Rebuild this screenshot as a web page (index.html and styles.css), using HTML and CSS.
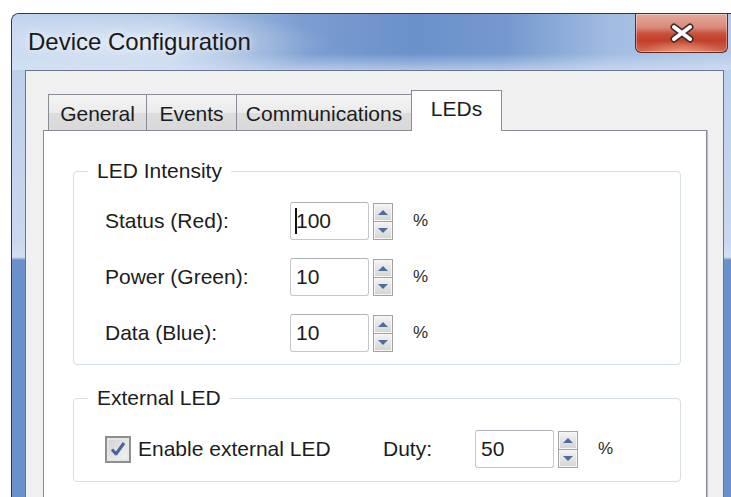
FILE: index.html
```html
<!DOCTYPE html>
<html lang="en">
<head>
<meta charset="utf-8">
<title>Device Configuration</title>
<link rel="stylesheet" href="styles.css">
</head>
<body>
<div class="window">
  <div class="titlebar">
    <span class="title">Device Configuration</span>
    <button class="close" type="button" aria-label="Close">
      <svg width="26" height="20" viewBox="0 0 26 20">
        <path d="M5 4 L21 16 M21 4 L5 16" stroke="#3a2b2b" stroke-width="7" stroke-linecap="round" fill="none"/>
        <path d="M5 4 L21 16 M21 4 L5 16" stroke="#ffffff" stroke-width="4" stroke-linecap="round" fill="none"/>
      </svg>
    </button>
  </div>
  <div class="frame">
    <div class="client">
      <div class="tabs">
        <div class="tab tab-general">General</div>
        <div class="tab tab-events">Events</div>
        <div class="tab tab-comms">Communications</div>
        <div class="tab tab-leds selected">LEDs</div>
      </div>
      <div class="panel">
        <fieldset class="group group-intensity">
          <legend>LED Intensity</legend>
          <div class="rows">
            <div class="row">
              <span class="label">Status (Red):</span>
              <div class="field"><span class="caret"></span>100</div>
              <div class="spin"><span class="spin-btn up"><i></i></span><span class="spin-btn down"><i></i></span></div>
              <span class="unit">%</span>
            </div>
            <div class="row">
              <span class="label">Power (Green):</span>
              <div class="field">10</div>
              <div class="spin"><span class="spin-btn up"><i></i></span><span class="spin-btn down"><i></i></span></div>
              <span class="unit">%</span>
            </div>
            <div class="row">
              <span class="label">Data (Blue):</span>
              <div class="field">10</div>
              <div class="spin"><span class="spin-btn up"><i></i></span><span class="spin-btn down"><i></i></span></div>
              <span class="unit">%</span>
            </div>
          </div>
        </fieldset>
        <fieldset class="group group-external">
          <legend>External LED</legend>
          <div class="rows">
            <div class="row">
              <label class="check">
                <span class="box">
                  <svg width="18" height="18" viewBox="0 0 18 18"><path d="M3 9.5 L7 14 L15 3" stroke="#4a62a0" stroke-width="3" fill="none" stroke-linejoin="round"/></svg>
                </span>
                <span>Enable external LED</span>
              </label>
              <span class="duty">Duty:</span>
              <div class="field">50</div>
              <div class="spin"><span class="spin-btn up"><i></i></span><span class="spin-btn down"><i></i></span></div>
              <span class="unit">%</span>
            </div>
          </div>
        </fieldset>
      </div>
    </div>
  </div>
</div>
</body>
</html>
```
FILE: styles.css
```css
* {
  box-sizing: border-box;
}

html,
body {
  margin: 0;
}

body {
  width: 731px;
  height: 497px;
  overflow: hidden;
  background: #ffffff;
  font-family: "Liberation Sans", Arial, sans-serif;
  font-size: 21px;
  color: #1c1c1c;
}

/* Aero window shell */
.window {
  margin: 13px 0 0 11px;
  width: 730px;
  height: 490px;
  border: 1px solid #2e3949;
  border-right: none;
  border-bottom: none;
  border-radius: 8px 0 0 0;
  background: linear-gradient(180deg, #b9cdea 0px, #c9d8ee 228px, #d4e0f1 243px, #6b91cb 246px, #6b91cb 100%);
  display: flex;
  flex-direction: column;
}

.titlebar {
  height: 56px;
  flex: none;
  display: flex;
  align-items: flex-start;
  border-radius: 7px 0 0 0;
  background:
    radial-gradient(ellipse 190px 34px at 130px 30px, rgba(255, 255, 255, 0.55), rgba(255, 255, 255, 0) 100%),
    linear-gradient(180deg, rgba(255, 255, 255, 0) 70%, rgba(220, 232, 246, 0.6) 100%),
    linear-gradient(90deg, #c3d5ee 0%, #b2c8e8 22%, #7b9dd1 40%, #6b91cb 55%, #7599cf 68%, #a2bce2 82%, #b6cbe9 100%);
}

.title {
  margin: 14px 0 0 16px;
  font-size: 24px;
  line-height: 28px;
  color: #1a1a1a;
  text-shadow: 0 0 8px rgba(255, 255, 255, 0.9);
}

.close {
  margin: 0 13px 0 auto;
  width: 93px;
  height: 39px;
  padding: 0;
  border: 1px solid #5e2a22;
  border-top: none;
  border-radius: 0 0 6px 6px;
  display: flex;
  align-items: center;
  justify-content: center;
  background:
    radial-gradient(ellipse 40px 12px at 50% 100%, rgba(255, 190, 150, 0.55), rgba(255, 190, 150, 0)),
    linear-gradient(180deg, #e6a99b 0%, #d98a7b 35%, #c8503b 52%, #c33f2a 70%, #d26a55 100%);
  box-shadow: inset 0 0 0 1px rgba(255, 255, 255, 0.35);
}

.frame {
  flex: 1;
  display: flex;
  padding-left: 13px;
  min-height: 0;
}

.client {
  width: 699px;
  border: 1px solid #66768d;
  border-bottom: none;
  background: #f0f0f0;
  display: flex;
  flex-direction: column;
}

/* Tab strip */
.tabs {
  display: flex;
  align-items: flex-end;
  height: 41px;
  margin: 19px 0 0 22px;
  position: relative;
  z-index: 1;
}

.tab {
  height: 36px;
  margin: 0 -1px 1px 0;
  padding-top: 7px;
  line-height: 24px;
  text-align: center;
  border: 1px solid #898c95;
  border-bottom: none;
  background: linear-gradient(180deg, #f4f4f4 0%, #ebebeb 50%, #dddddd 51%, #d9d9d9 100%);
  color: #1c1c1c;
}

.tab-general {
  width: 99px;
}

.tab-events {
  width: 91px;
}

.tab-comms {
  width: 176px;
}

.tab.selected {
  width: 91px;
  height: 41px;
  margin-bottom: 0;
  padding-top: 6px;
  background: #ffffff;
  border-color: #898c95;
}

.panel {
  flex: 1;
  margin: -1px 0 0 17px;
  width: 664px;
  padding: 28px 25px 0 29px;
  background: #ffffff;
  border: 1px solid #898c95;
  border-bottom: none;
  box-shadow: 1px 0 0 #b9bcc2;
}

/* Group boxes */
.group {
  margin: 0;
  padding: 0;
  min-width: 0;
  border: 1px solid #d6dfe6;
  border-radius: 4px;
}

.group legend {
  margin-left: 14px;
  padding: 0 9px;
  font-size: 21px;
  line-height: 24px;
  color: #1c1c1c;
}

.group-external {
  margin-top: 21px;
}

.rows {
  display: flex;
  flex-direction: column;
  gap: 18px;
  padding: 19px 0 12px 31px;
}

.group-external .rows {
  padding: 20px 0 13px 31px;
}

.row {
  display: flex;
  align-items: center;
  height: 38px;
  line-height: 24px;
}

.label {
  width: 185px;
}

.field {
  width: 79px;
  height: 38px;
  padding-left: 5px;
  display: flex;
  align-items: center;
  border: 1px solid #c4c8ce;
  border-top-color: #adb2b9;
  border-radius: 3px;
  background: #ffffff;
}

.caret {
  width: 2px;
  height: 26px;
  margin: 0 -1px 0 -1px;
  background: #111111;
}

/* Up/down buttons */
.spin {
  width: 20px;
  height: 37px;
  margin-left: 4px;
  display: flex;
  flex-direction: column;
  border: 1px solid #a3a3a3;
  background: #a3a3a3;
  gap: 1px;
}

.spin-btn {
  flex: 1;
  display: flex;
  align-items: center;
  justify-content: center;
  border: 1px solid #f7f7f7;
  background: linear-gradient(180deg, #f2f2f2 0%, #e4e4e4 50%, #d6d6d6 100%);
}

.spin-btn i {
  width: 0;
  height: 0;
  border-left: 5px solid transparent;
  border-right: 5px solid transparent;
}

.spin-btn.up i {
  border-bottom: 5px solid #4f6c9e;
}

.spin-btn.down i {
  border-top: 5px solid #4f6c9e;
}

.unit {
  margin-left: 20px;
  font-size: 17px;
  color: #2a2a2a;
}

/* Checkbox */
.check {
  width: 278px;
  display: flex;
  align-items: center;
  gap: 7px;
}

.box {
  width: 26px;
  height: 27px;
  display: flex;
  align-items: center;
  justify-content: center;
  border: 2px solid #8e8f90;
  box-shadow: inset 0 0 0 2px #e6e6e6;
  background: linear-gradient(135deg, #cfd0d2 0%, #e6e7e8 60%, #f4f4f4 100%);
}

.duty {
  width: 92px;
}
```
